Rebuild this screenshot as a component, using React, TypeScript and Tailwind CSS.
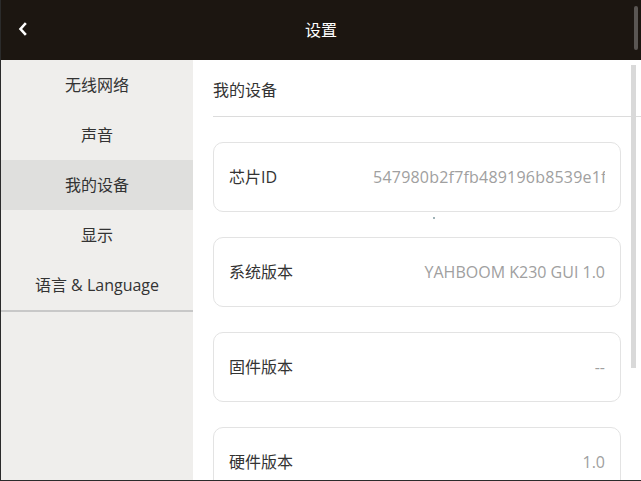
import React from "react";

const menu = ["无线网络", "声音", "我的设备", "显示", "语言 & Language"];

const rows = [
  { label: "芯片ID", value: "9c5547980b2f7fb489196b8539e1f0", clip: true },
  { label: "系统版本", value: "YAHBOOM K230 GUI 1.0" },
  { label: "固件版本", value: "--" },
  { label: "硬件版本", value: "1.0" },
];

const font = {
  fontFamily: '"Open Sans", "Noto Sans CJK SC", sans-serif',
};

export default function App() {
  return (
    <div
      className="relative w-[641px] h-[481px] overflow-hidden bg-white border-l border-b border-[#2b2b2b] flex flex-col"
      style={font}
    >
      {/* 顶栏 */}
      <div className="relative h-[60px] shrink-0 bg-[#1c1611] flex items-center justify-center">
        <svg
          className="absolute left-[16px] top-[22px]"
          width="12"
          height="14"
          viewBox="0 0 12 14"
        >
          <polyline
            points="8,2 3.5,7 8,12"
            fill="none"
            stroke="white"
            strokeWidth="2.6"
            strokeLinecap="square"
          />
        </svg>
        <span className="text-white text-base">设置</span>
        <div className="absolute right-[3px] top-[6px] w-[4px] h-[44px] rounded-full bg-[#5a5653]" />
      </div>

      <div className="flex flex-1 min-h-0">
        {/* 侧边栏 */}
        <div className="w-[192px] shrink-0 bg-[#efeeec] flex flex-col">
          {menu.map((m) => (
            <div
              key={m}
              className={`h-[50px] flex items-center justify-center text-base text-[#333] ${
                m === "我的设备" ? "bg-[#dfdfdd]" : ""
              }`}
            >
              {m}
            </div>
          ))}
          <div className="h-[2px] bg-[#c8c8c8]" />
        </div>

        {/* 内容 */}
        <div className="relative flex-1 pl-[20px] overflow-hidden">
          <div className="h-[57px] pt-[18px] border-b border-[#dcdcdc] text-base text-[#333]">
            我的设备
          </div>
          <div className="flex flex-col gap-[25px] pt-[25px] w-[408px]">
            {rows.map((r) => (
              <div
                key={r.label}
                className="h-[70px] shrink-0 rounded-[10px] border border-[#e3e3e3] flex items-center justify-between px-[15px]"
              >
                <span className="text-base text-[#333]">{r.label}</span>
                {r.clip ? (
                  <div className="w-[232px] overflow-hidden flex justify-end">
                    <span className="whitespace-nowrap text-base text-[#a0a0a0] mr-[-11px] shrink-0 tracking-[0.2px]">
                      {r.value}
                    </span>
                  </div>
                ) : (
                  <span className="text-base text-[#a0a0a0] whitespace-nowrap">
                    {r.value}
                  </span>
                )}
              </div>
            ))}
          </div>
          <div className="absolute left-[240px] top-[157px] w-[2px] h-[2px] bg-[#9fb3b8]" />
          <div className="absolute right-[5px] top-[5px] w-[5px] h-[303px] bg-[#d9d9d9]" />
        </div>
      </div>
    </div>
  );
}
